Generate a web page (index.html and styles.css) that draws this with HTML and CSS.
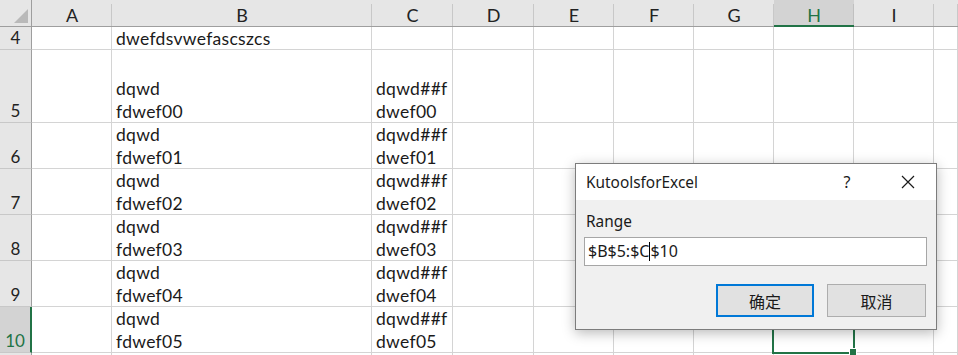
FILE: index.html
```html
<!DOCTYPE html>
<html>
<head>
<meta charset="utf-8">
<link rel="stylesheet" href="styles.css">
</head>
<body>
<div class="sheet">
  <div class="ch corner"><span class="tri"></span></div>
  <div class="ch">A</div><div class="ch">B</div><div class="ch">C</div><div class="ch">D</div><div class="ch">E</div><div class="ch">F</div><div class="ch">G</div><div class="ch sel">H</div><div class="ch">I</div><div class="ch"></div>

  <div class="rh">4</div>
  <div class="c"></div><div class="c"><span class="t">dwefdsvwefascszcs</span></div><div class="c"></div><div class="c"></div><div class="c"></div><div class="c"></div><div class="c"></div><div class="c"></div><div class="c"></div><div class="c"></div>

  <div class="rh">5</div>
  <div class="c"></div><div class="c"><span class="t">dqwd<br>fdwef00</span></div><div class="c"><span class="t">dqwd##f<br>dwef00</span></div><div class="c"></div><div class="c"></div><div class="c"></div><div class="c"></div><div class="c"></div><div class="c"></div><div class="c"></div>

  <div class="rh">6</div>
  <div class="c"></div><div class="c"><span class="t">dqwd<br>fdwef01</span></div><div class="c"><span class="t">dqwd##f<br>dwef01</span></div><div class="c"></div><div class="c"></div><div class="c"></div><div class="c"></div><div class="c"></div><div class="c"></div><div class="c"></div>

  <div class="rh">7</div>
  <div class="c"></div><div class="c"><span class="t">dqwd<br>fdwef02</span></div><div class="c"><span class="t">dqwd##f<br>dwef02</span></div><div class="c"></div><div class="c"></div><div class="c"></div><div class="c"></div><div class="c"></div><div class="c"></div><div class="c"></div>

  <div class="rh">8</div>
  <div class="c"></div><div class="c"><span class="t">dqwd<br>fdwef03</span></div><div class="c"><span class="t">dqwd##f<br>dwef03</span></div><div class="c"></div><div class="c"></div><div class="c"></div><div class="c"></div><div class="c"></div><div class="c"></div><div class="c"></div>

  <div class="rh">9</div>
  <div class="c"></div><div class="c"><span class="t">dqwd<br>fdwef04</span></div><div class="c"><span class="t">dqwd##f<br>dwef04</span></div><div class="c"></div><div class="c"></div><div class="c"></div><div class="c"></div><div class="c"></div><div class="c"></div><div class="c"></div>

  <div class="rh sel">10</div>
  <div class="c"></div><div class="c"><span class="t">dqwd<br>fdwef05</span></div><div class="c"><span class="t">dqwd##f<br>dwef05</span></div><div class="c"></div><div class="c"></div><div class="c"></div><div class="c"></div><div class="c"></div><div class="c"></div><div class="c"></div>

  <div class="rh"></div>
  <div class="c"></div><div class="c"></div><div class="c"></div><div class="c"></div><div class="c"></div><div class="c"></div><div class="c"></div><div class="c"></div><div class="c"></div><div class="c"></div>

  <div class="cursor"><span class="handle"></span></div>

  <div class="dialog">
    <div class="titlebar">
      <span class="title">KutoolsforExcel</span>
      <span class="help">?</span>
      <svg class="close" width="14" height="14" viewBox="0 0 14 14"><path d="M1 1L13 13M13 1L1 13" stroke="#1a1a1a" stroke-width="1.2" fill="none"/></svg>
    </div>
    <div class="body">
      <div class="label">Range</div>
      <div class="input">$B$5:$C<span class="caret"></span>$10</div>
      <div class="buttons">
        <div class="btn primary">确定</div>
        <div class="btn">取消</div>
      </div>
    </div>
  </div>
</div>
</body>
</html>
```

FILE: styles.css
```css
html, body {
  margin: 0;
  padding: 0;
  background: #ffffff;
  overflow: hidden;
}
.sheet {
  position: relative;
  width: 958px;
  height: 355px;
  overflow: hidden;
  display: grid;
  grid-template-columns: 32px 80px 260px 81px 81px 80px 80px 80px 80px 80px 1fr;
  grid-template-rows: 27px 23px 73px 46px 46px 46px 46px 46px 46px;
  font-family: "Lato", "Noto Sans CJK SC", sans-serif;
  color: #1a1a1a;
}
.ch {
  box-sizing: border-box;
  background: linear-gradient(#c8c8c8, #c8c8c8) right bottom / 1px calc(100% - 4px) no-repeat, #e6e6e6;
  border-bottom: 1px solid #9e9e9e;
  font-size: 18px;
  display: flex;
  align-items: center;
  justify-content: center;
  padding-top: 4px;
  color: #222;
}
.ch.sel {
  background: linear-gradient(#c0c0c0, #c0c0c0) right bottom / 1px calc(100% - 4px) no-repeat, #d3d3d3;
  border-bottom: 2px solid #217346;
  color: #217346;
}
.corner {
  position: relative;
  background: #e6e6e6;
  border-right: 1px solid #9e9e9e;
}
.tri {
  position: absolute;
  right: 3px;
  bottom: 3px;
  width: 0;
  height: 0;
  border-left: 14px solid transparent;
  border-bottom: 14px solid #b9b9b9;
}
.rh {
  box-sizing: border-box;
  background: #e6e6e6;
  border-right: 1px solid #9e9e9e;
  border-bottom: 1px solid #c8c8c8;
  font-size: 17px;
  line-height: 23px;
  display: flex;
  align-items: flex-end;
  justify-content: center;
  color: #222;
}
.rh.sel {
  background: #d3d3d3;
  border-right: 2px solid #217346;
  color: #217346;
}
.c {
  box-sizing: border-box;
  background: #fff;
  border-right: 1px solid #d4d4d4;
  border-bottom: 1px solid #d4d4d4;
  display: flex;
  align-items: flex-end;
  padding-left: 4px;
  font-size: 17.5px;
  letter-spacing: 0.3px;
  line-height: 23px;
  white-space: nowrap;
}
.t {
  margin-bottom: -1px;
}
.cursor {
  position: absolute;
  left: 772px;
  top: 305px;
  width: 83px;
  height: 49px;
  box-sizing: border-box;
  border: 2px solid #217346;
}
.handle {
  position: absolute;
  right: -4px;
  bottom: -4px;
  width: 6px;
  height: 6px;
  background: #217346;
  border: 1px solid #fff;
}
.dialog {
  position: absolute;
  left: 575px;
  top: 163px;
  width: 362px;
  height: 167px;
  box-sizing: border-box;
  border: 1px solid #7c7c7c;
  background: #f0f0f0;
  box-shadow: 0 3px 12px rgba(0, 0, 0, 0.28);
  display: flex;
  flex-direction: column;
  font-family: "Noto Sans", "Noto Sans CJK SC", sans-serif;
  color: #1a1a1a;
}
.titlebar {
  height: 36px;
  background: #fff;
  display: flex;
  align-items: center;
  padding-left: 10px;
  font-size: 15.4px;
}
.title {
  flex: 1;
}
.help {
  width: 20px;
  text-align: center;
  margin-right: 44px;
  font-size: 16px;
}
.close {
  margin-right: 21px;
}
.body {
  flex: 1;
  display: flex;
  flex-direction: column;
  padding: 12px 9px 0 8px;
}
.label {
  font-size: 15.4px;
  line-height: 20px;
  padding-left: 2px;
}
.input {
  margin-top: 5px;
  height: 29px;
  box-sizing: border-box;
  border: 1px solid #a6a6a6;
  background: #fff;
  font-size: 16px;
  line-height: 27px;
  padding-left: 3px;
  display: flex;
  align-items: center;
}
.caret {
  display: inline-block;
  width: 1px;
  height: 19px;
  background: #000;
}
.buttons {
  margin-top: 18px;
  display: flex;
  justify-content: flex-end;
  gap: 13px;
  padding-right: 1px;
}
.btn {
  width: 99px;
  height: 33px;
  box-sizing: border-box;
  border: 1px solid #adadad;
  background: #e1e1e1;
  font-family: "Noto Sans CJK SC", sans-serif;
  font-size: 16px;
  display: flex;
  align-items: center;
  justify-content: center;
}
.btn.primary {
  width: 98px;
  border: 2px solid #0078d7;
}
```
